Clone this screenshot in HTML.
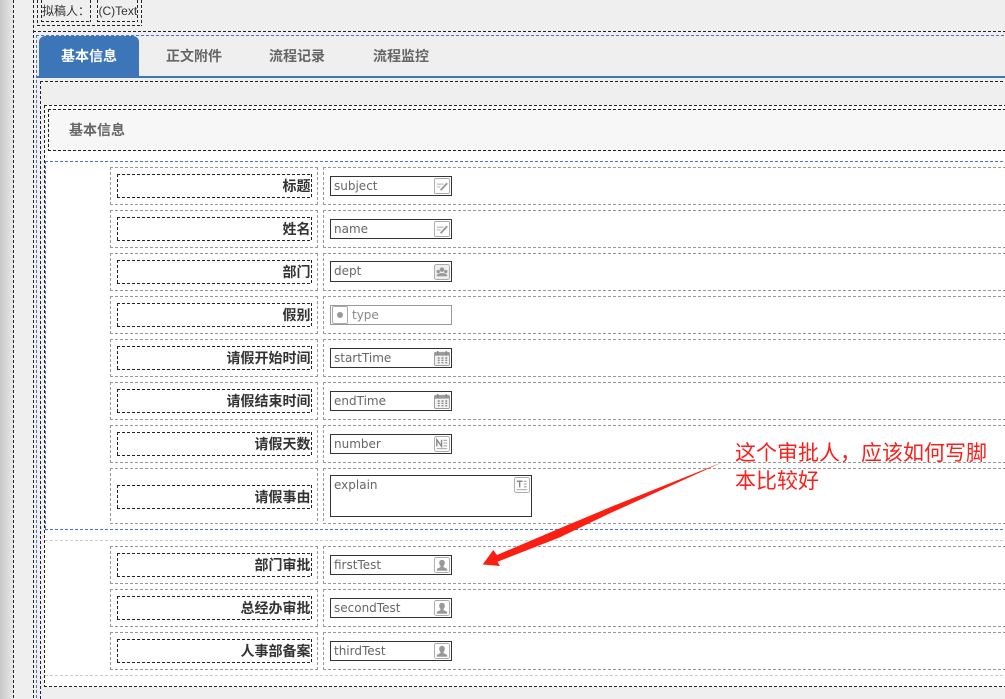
<!DOCTYPE html>
<html lang="zh"><head><meta charset="utf-8"><title>基本信息</title>
<style>
html,body{margin:0;padding:0;width:1005px;height:699px;overflow:hidden;background:#efefef}
body{position:relative;font-family:"Liberation Sans","Noto Sans CJK SC",sans-serif}
div,span.a,svg.a{position:absolute;box-sizing:border-box}
.v{width:1px;--c:#222;background:repeating-linear-gradient(180deg,var(--c) 0 3px,transparent 3px 5px)}
.h{height:1px;left:0;right:0;--c:#222;background:repeating-linear-gradient(90deg,var(--c) 0 3px,transparent 3px 5px)}
.d{--c:#222;background:
repeating-linear-gradient(90deg,var(--c) 0 3px,transparent 3px 5px) left top/100% 1px no-repeat,
repeating-linear-gradient(90deg,var(--c) 0 3px,transparent 3px 5px) left bottom/100% 1px no-repeat,
repeating-linear-gradient(180deg,var(--c) 0 3px,transparent 3px 5px) left top/1px 100% no-repeat,
repeating-linear-gradient(180deg,var(--c) 0 3px,transparent 3px 5px) right top/1px 100% no-repeat}
.b{--c:#4a6fe0}
.g{--c:#999}
.lg{--c:#ccc}
.tab{top:36px;height:40px;line-height:40px;font-size:14px;font-weight:bold;color:#666;white-space:nowrap}
.o{left:110px;width:208px;--c:#999}
.w{left:323px;width:720px;--c:#999}
.l{left:117px;width:195px;height:24px;padding:1px 1.500px 1px 1px;text-align:right;font-size:14px;font-weight:bold;color:#333;line-height:22px;white-space:nowrap}
.i{left:330px;width:122px;height:20px;border:1px solid #333;background:#fff;font:12px/19px "DejaVu Sans",sans-serif;color:#666;padding-left:3px;white-space:nowrap}
.ic{left:434px;width:16px;height:16px}
</style></head><body>
<svg width="0" height="0" style="position:absolute">
<symbol id="e" viewBox="0 0 17 17"><rect x=".5" y=".5" width="16" height="16" rx="1.5" fill="#fff" stroke="#aaa"/><path d="M3 6.500h7M3 9.500h4" stroke="#aaa"/><path d="M7 13l7-7.500" stroke="#999" stroke-width="2"/></symbol>
<symbol id="d" viewBox="0 0 17 17"><rect x=".5" y=".5" width="16" height="16" rx="2" fill="#eee" stroke="#aaa"/><circle cx="8.500" cy="6" r="2.400" fill="#999"/><circle cx="4.500" cy="8" r="1.800" fill="#999"/><circle cx="12.500" cy="8" r="1.800" fill="#999"/><path d="M3 12c1-3 10-3 11 0v1H3z" fill="#999"/></symbol>
<symbol id="c" viewBox="0 0 17 17"><rect x=".5" y="2.500" width="16" height="14" rx="1.500" fill="#f2f2f2" stroke="#999"/><rect x="1" y="3" width="15" height="3" fill="#999"/><path d="M4 1v4M13 1v4" stroke="#888" stroke-width="1.500"/><path d="M4 8.500h2M8 8.500h2M12 8.500h2M4 11h2M8 11h2M12 11h2M4 13.500h2M8 13.500h2M12 13.500h2" stroke="#888" stroke-width="1.500"/></symbol>
<symbol id="n" viewBox="0 0 17 17"><rect x=".5" y=".5" width="16" height="16" rx="2" fill="#fff" stroke="#aaa"/><path d="M3 11V4l5 7V4" fill="none" stroke="#888" stroke-width="1.500"/><path d="M10 4.500h4M10 7.500h4M10 10.500h4M3 13.500h11" stroke="#999"/></symbol>
<symbol id="t" viewBox="0 0 17 17"><rect x=".5" y=".5" width="16" height="16" rx="2" fill="#fff" stroke="#aaa"/><path d="M3 4.500h6M6 4.500V11" fill="none" stroke="#888" stroke-width="1.500"/><path d="M10.500 4.500h3M10.500 7.500h3M10.500 10.500h3M3 13.500h11" stroke="#999"/></symbol>
<symbol id="u" viewBox="0 0 17 17"><rect x=".5" y=".5" width="16" height="16" rx="2" fill="#fff" stroke="#aaa"/><path d="M8.500 3c2 0 3 1.300 3 3.200 0 1.500-.7 2.700-1.400 3.400v1l3.900 2v2h-11v-2l3.900-2v-1C6.200 8.900 5.500 7.700 5.500 6.200 5.500 4.300 6.500 3 8.500 3z" fill="#999"/></symbol>
</svg>

<div style="left:0;top:0;width:13px;height:699px;background:linear-gradient(90deg,#c8c8c8,#e8e8e8)"></div>
<div class="v" style="left:13px;top:0;height:699px"></div>
<div class="v" style="left:33px;top:0;height:699px"></div>

<div class="d" style="left:37px;top:-5px;width:105px;height:31px"></div>
<div class="d" style="left:41px;top:-5px;width:50px;height:27px"></div>
<div class="d" style="left:97px;top:-5px;width:41px;height:27px"></div>
<div style="left:42px;top:3px;font-size:12px;line-height:16px;color:#333;white-space:nowrap">拟稿人：</div>
<div style="left:98.500px;top:3px;font-size:12px;line-height:16px;color:#333;white-space:nowrap">(C)Text</div>

<div class="h" style="left:33px;top:31px"></div>
<div class="h b" style="left:36px;top:35px"></div>
<div class="v b" style="left:36px;top:35px;height:664px"></div>

<div style="left:39px;top:36px;width:100px;height:41px;background:#3c76b8;border-radius:6px 6px 0 0"></div>
<div class="tab" style="left:61px;color:#fff">基本信息</div>
<div class="tab" style="left:166px">正文附件</div>
<div class="tab" style="left:269px">流程记录</div>
<div class="tab" style="left:373px">流程监控</div>
<div style="left:37px;top:76px;right:0;height:2px;background:#3c76b8"></div>

<div class="h" style="left:40px;top:81px"></div>
<div class="v" style="left:40px;top:81px;height:618px"></div>
<div style="left:44px;top:105px;width:1000px;height:582px;background:#fff"></div>
<div class="d" style="left:44px;top:105px;width:1000px;height:582px"></div>
<div style="left:45px;top:109px;width:960px;height:42px;background:#f7f7f7"></div>
<div class="d" style="left:48px;top:109px;width:1000px;height:42px"></div>
<div style="left:69px;top:119px;font-size:14px;font-weight:bold;line-height:22px;color:#666;white-space:nowrap">基本信息</div>

<div class="h b" style="left:45px;top:161px"></div>
<div class="v b" style="left:45px;top:161px;height:369px"></div>
<div class="h b" style="left:45px;top:529px"></div>
<div class="h lg" style="left:45px;top:540px"></div>
<div class="h lg" style="left:45px;top:675px"></div>

<div class="d o" style="top:167px;height:38px"></div><div class="d w" style="top:167px;height:38px"></div>
<div class="d l" style="top:174px">标题</div>
<div class="i" style="top:176px">subject</div><svg class="a ic" style="top:178px"><use href="#e"/></svg>

<div class="d o" style="top:210px;height:38px"></div><div class="d w" style="top:210px;height:38px"></div>
<div class="d l" style="top:217px">姓名</div>
<div class="i" style="top:219px">name</div><svg class="a ic" style="top:221px"><use href="#e"/></svg>

<div class="d o" style="top:253px;height:38px"></div><div class="d w" style="top:253px;height:38px"></div>
<div class="d l" style="top:260px">部门</div>
<div class="i" style="top:261px;height:21px">dept</div><svg class="a ic" style="top:264px"><use href="#d"/></svg>

<div class="d o" style="top:296px;height:38px"></div><div class="d w" style="top:296px;height:38px"></div>
<div class="d l" style="top:303px">假别</div>
<div class="i" style="top:305px;border-color:#999;color:#888;padding-left:21px">type</div>
<div style="left:332px;top:306px;width:16px;height:18px;border:1px solid #aaa;border-radius:2px"></div>
<div style="left:337px;top:312px;width:6px;height:6px;border-radius:50%;background:#999"></div>

<div class="d o" style="top:339px;height:38px"></div><div class="d w" style="top:339px;height:38px"></div>
<div class="d l" style="top:346px">请假开始时间</div>
<div class="i" style="top:348px">startTime</div><svg class="a ic" style="top:350px"><use href="#c"/></svg>

<div class="d o" style="top:382px;height:38px"></div><div class="d w" style="top:382px;height:38px"></div>
<div class="d l" style="top:389px">请假结束时间</div>
<div class="i" style="top:391px">endTime</div><svg class="a ic" style="top:393px"><use href="#c"/></svg>

<div class="d o" style="top:425px;height:38px"></div><div class="d w" style="top:425px;height:38px"></div>
<div class="d l" style="top:432px">请假天数</div>
<div class="i" style="top:434px">number</div><svg class="a ic" style="top:436px"><use href="#n"/></svg>

<div class="d o" style="top:468px;height:56px"></div><div class="d w" style="top:468px;height:56px"></div>
<div class="d l" style="top:485px">请假事由</div>
<div class="i" style="top:475px;width:202px;height:42px">explain</div><svg class="a ic" style="left:514px;top:477px"><use href="#t"/></svg>

<div class="d o" style="top:546px;height:38px"></div><div class="d w" style="top:546px;height:38px"></div>
<div class="d l" style="top:553px">部门审批</div>
<div class="i" style="top:555px">firstTest</div><svg class="a ic" style="top:557px"><use href="#u"/></svg>

<div class="d o" style="top:589px;height:38px"></div><div class="d w" style="top:589px;height:38px"></div>
<div class="d l" style="top:596px">总经办审批</div>
<div class="i" style="top:598px">secondTest</div><svg class="a ic" style="top:600px"><use href="#u"/></svg>

<div class="d o" style="top:632px;height:38px"></div><div class="d w" style="top:632px;height:38px"></div>
<div class="d l" style="top:639px">人事部备案</div>
<div class="i" style="top:641px">thirdTest</div><svg class="a ic" style="top:643px"><use href="#u"/></svg>

<svg class="a" style="left:0;top:0" width="1005" height="699"><polygon points="723,462 610,507.300 560,528.300 497,555 493.300,550 482.700,564.500 500,566 497.500,561.700 560,537.300 610,513.300" fill="#fb1f13"/></svg>
<div style="left:735px;top:440px;font-size:21px;line-height:28px;color:#f8201a;white-space:nowrap">这个审批人，应该如何写脚<br>本比较好</div>
</body></html>
